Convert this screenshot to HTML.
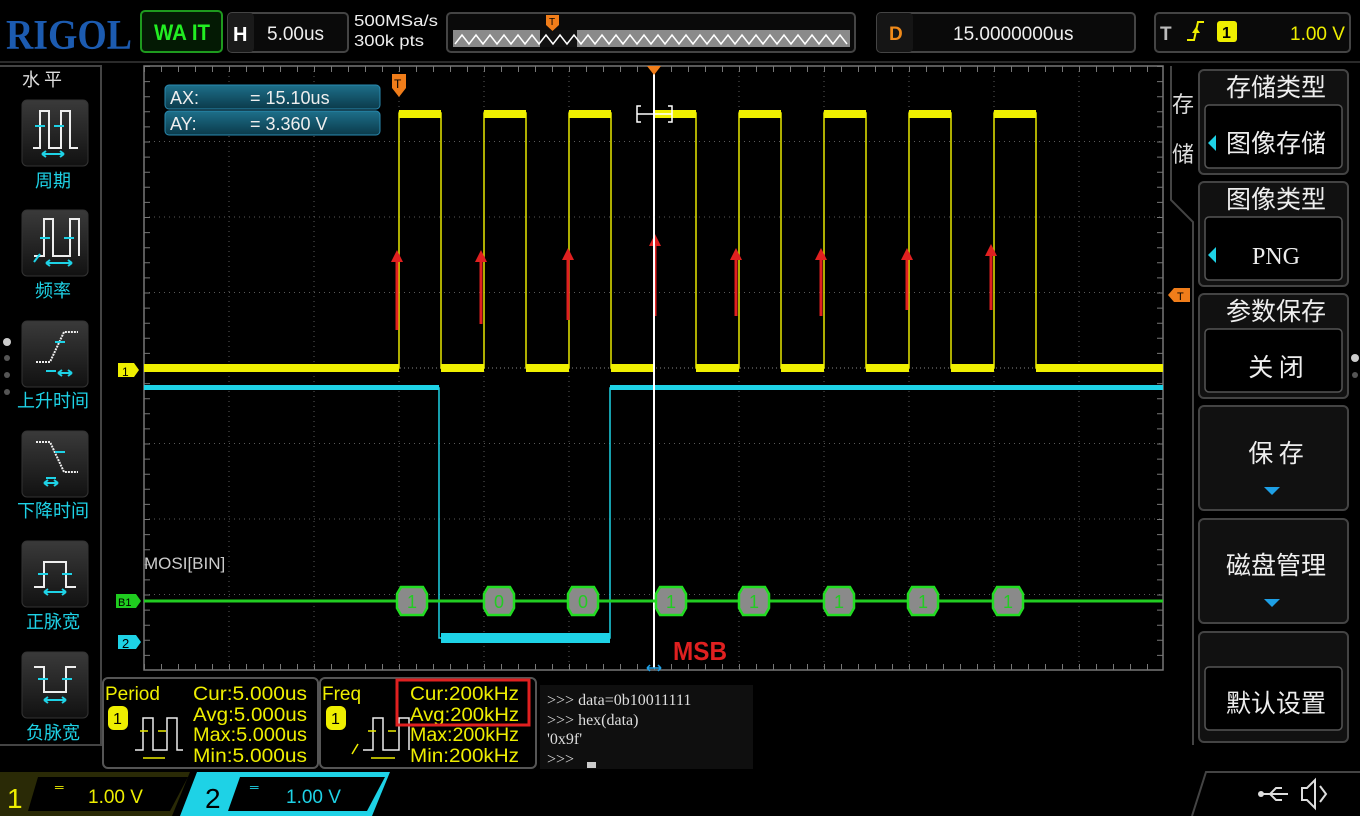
<!DOCTYPE html>
<html><head><meta charset="utf-8"><style>
html,body{margin:0;padding:0;background:#000;width:1360px;height:816px;overflow:hidden}
svg{display:block}
.s{font-family:"Liberation Sans","Noto Sans CJK SC",sans-serif}
.cj{font-family:"Noto Sans CJK SC","WenQuanYi Zen Hei",sans-serif}
.m{font-family:"Liberation Serif","Noto Serif CJK SC",serif}
</style></head><body>
<svg width="1360" height="816" viewBox="0 0 1360 816" xmlns="http://www.w3.org/2000/svg">
<defs>
<linearGradient id="btn" x1="0" y1="0" x2="0" y2="1"><stop offset="0" stop-color="#3a3a3a"/><stop offset="1" stop-color="#111"/></linearGradient>
<linearGradient id="axg" x1="0" y1="0" x2="0" y2="1"><stop offset="0" stop-color="#1d6f8a"/><stop offset="1" stop-color="#0b3a4a"/></linearGradient>
</defs>
<rect width="1360" height="816" fill="#000"/>
<!-- top bar -->
<text x="6" y="49" class="m" font-size="42" font-weight="bold" fill="#1c5bb0" textLength="126" lengthAdjust="spacingAndGlyphs">RIGOL</text>
<rect x="141" y="11" width="81" height="41" rx="4" fill="#041a04" stroke="#1e9a1e" stroke-width="2"/>
<text x="154" y="40" class="s" font-size="22" font-weight="bold" fill="#22ee22" textLength="56" lengthAdjust="spacingAndGlyphs">WA IT</text>
<rect x="228" y="13" width="120" height="39" rx="4" fill="#0a0a0a" stroke="#444" stroke-width="2"/>
<rect x="228" y="13" width="26" height="39" rx="4" fill="#1a1a1a"/>
<text x="233" y="41" class="s" font-size="20" font-weight="bold" fill="#fff">H</text>
<text x="267" y="40" class="s" font-size="19" fill="#eee">5.00us</text>
<text x="354" y="26" class="s" font-size="16" fill="#eee" textLength="84" lengthAdjust="spacingAndGlyphs">500MSa/s</text>
<text x="354" y="46" class="s" font-size="16" fill="#eee" textLength="70" lengthAdjust="spacingAndGlyphs">300k pts</text>
<rect x="447" y="13" width="408" height="39" rx="4" fill="#0a0a0a" stroke="#444" stroke-width="2"/>
<rect x="453" y="30" width="397" height="17" fill="#8a8a8a"/>
<rect x="540" y="30" width="37" height="17" fill="#111"/>
<polyline fill="none" stroke="#fff" stroke-width="1.5" points="455,44 462,35 469,44 476,35 483,44 490,35 497,44 504,35 511,44 518,35 525,44 532,35 539,44 546,35 553,44 560,35 567,44 574,35 581,44 588,35 595,44 602,35 609,44 616,35 623,44 630,35 637,44 644,35 651,44 658,35 665,44 672,35 679,44 686,35 693,44 700,35 707,44 714,35 721,44 728,35 735,44 742,35 749,44 756,35 763,44 770,35 777,44 784,35 791,44 798,35 805,44 812,35 819,44 826,35 833,44 840,35 847,44"/>
<path d="M546,15 h13 v10 l-6.5,6 l-6.5,-6z" fill="#f07d1a"/>
<text x="549" y="25" class="s" font-size="10" fill="#000">T</text>
<rect x="877" y="13" width="258" height="39" rx="4" fill="#0a0a0a" stroke="#444" stroke-width="2"/>
<rect x="877" y="13" width="36" height="39" rx="4" fill="#151515"/>
<text x="889" y="40" class="s" font-size="19" font-weight="bold" fill="#f08a1a">D</text>
<text x="953" y="40" class="s" font-size="19" fill="#eee">15.0000000us</text>
<rect x="1155" y="13" width="195" height="39" rx="4" fill="#0a0a0a" stroke="#444" stroke-width="2"/>
<text x="1160" y="40" class="s" font-size="19" font-weight="bold" fill="#bbb">T</text>
<path d="M1187,40 h7 l4,-18 h6" fill="none" stroke="#ee0" stroke-width="2"/>
<path d="M1192,33 l4,-6 l4,6z" fill="#ee0"/>
<rect x="1217" y="21" width="20" height="21" rx="3" fill="#ee0"/>
<text x="1222" y="38" class="s" font-size="16" font-weight="bold" fill="#000">1</text>
<text x="1290" y="40" class="s" font-size="19" fill="#ee0">1.00 V</text>
<line x1="0" y1="62" x2="1360" y2="62" stroke="#2a2a2a" stroke-width="2"/>

<!-- left panel -->
<path d="M0,66 H101 V745 H0" fill="none" stroke="#444" stroke-width="2"/>
<text x="22" y="86" class="cj" font-size="18" fill="#ddd">水 平</text>
<g fill="url(#btn)" stroke="#333">
<rect x="22" y="100" width="66" height="66" rx="5"/>
<rect x="22" y="210" width="66" height="66" rx="5"/>
<rect x="22" y="321" width="66" height="66" rx="5"/>
<rect x="22" y="431" width="66" height="66" rx="5"/>
<rect x="22" y="541" width="66" height="66" rx="5"/>
<rect x="22" y="652" width="66" height="66" rx="5"/>
</g>
<g fill="none" stroke="#eee" stroke-width="2">
<path d="M33,148 h7 v-37 h9 v37 h12 v-37 h9 v37 h8"/>
<path d="M34,256 h10 v-37 h9 v37 h17 v-37 h9 v37"/>
<path d="M36,362 h14 l14,-30 h14" stroke-dasharray="2 1"/>
<path d="M36,442 h14 l14,30 h14" stroke-dasharray="2 1"/>
<path d="M34,587 h10 v-25 h22 v25 h10"/>
<path d="M34,667 h10 v25 h22 v-25 h10"/>
</g>
<g fill="none" stroke="#1ed2e6" stroke-width="2">
<path d="M35,126 h10 M54,126 h10 M42,154 h22 M42,154 l4,-3 M42,154 l4,3 M64,154 l-4,-3 M64,154 l-4,3"/>
<path d="M40,238 h10 M64,238 h10 M46,263 h26 M46,263 l4,-3 M46,263 l4,3 M72,263 l-4,-3 M72,263 l-4,3 M34,262 l6,-8"/>
<path d="M55,342 h10 M46,371 h10 M58,373 h14 M58,373 l4,-3 M58,373 l4,3 M72,373 l-4,-3 M72,373 l-4,3"/>
<path d="M55,452 h10 M46,478 h10 M44,483 h14 M44,483 l4,-3 M44,483 l4,3 M58,483 l-4,-3 M58,483 l-4,3"/>
<path d="M38,574 h10 M62,574 h10 M44,592 h22 M44,592 l4,-3 M44,592 l4,3 M66,592 l-4,-3 M66,592 l-4,3"/>
<path d="M38,679 h10 M62,679 h10 M44,700 h22 M44,700 l4,-3 M44,700 l4,3 M66,700 l-4,-3 M66,700 l-4,3"/>
</g>
<g class="cj" font-size="18" fill="#1ed2e6" text-anchor="middle">
<text x="53" y="187">周期</text>
<text x="53" y="297">频率</text>
<text x="53" y="407">上升时间</text>
<text x="53" y="517">下降时间</text>
<text x="53" y="628">正脉宽</text>
<text x="53" y="739">负脉宽</text>
</g>
<circle cx="7" cy="342" r="4" fill="#ccc"/><circle cx="7" cy="358" r="3" fill="#555"/><circle cx="7" cy="375" r="3" fill="#555"/><circle cx="7" cy="392" r="3" fill="#555"/>

<!-- screen -->
<rect x="144" y="66" width="1019" height="604" fill="#000" stroke="#777" stroke-width="1.5"/>
<g stroke="#5a5a5a" stroke-width="1" stroke-dasharray="1 4">
<line x1="229" y1="66" x2="229" y2="670"/><line x1="314" y1="66" x2="314" y2="670"/><line x1="399" y1="66" x2="399" y2="670"/><line x1="484" y1="66" x2="484" y2="670"/><line x1="569" y1="66" x2="569" y2="670"/><line x1="739" y1="66" x2="739" y2="670"/><line x1="824" y1="66" x2="824" y2="670"/><line x1="909" y1="66" x2="909" y2="670"/><line x1="994" y1="66" x2="994" y2="670"/><line x1="1079" y1="66" x2="1079" y2="670"/>
<line x1="144" y1="141.5" x2="1163" y2="141.5"/><line x1="144" y1="217" x2="1163" y2="217"/><line x1="144" y1="292.5" x2="1163" y2="292.5"/><line x1="144" y1="443.5" x2="1163" y2="443.5"/><line x1="144" y1="519" x2="1163" y2="519"/><line x1="144" y1="594.5" x2="1163" y2="594.5"/>
</g>
<g stroke="#888" stroke-width="1" stroke-dasharray="1 3">
<line x1="654" y1="66" x2="654" y2="670"/><line x1="144" y1="368" x2="1163" y2="368"/>
</g>
<g stroke="#777" stroke-width="6" stroke-dasharray="1 16">
<line x1="144" y1="69" x2="1163" y2="69"/><line x1="144" y1="667" x2="1163" y2="667"/>
</g>
<g stroke="#777" stroke-width="6" stroke-dasharray="1 14.1">
<line x1="147" y1="66" x2="147" y2="670"/><line x1="1160" y1="66" x2="1160" y2="670"/>
</g>
<!-- yellow ch1 -->
<path d="M144,368 H399 V113 H441 V368 H484 V113 H526 V368 H569 V113 H611 V368 H654 V113 H696 V368 H739 V113 H781 V368 H824 V113 H866 V368 H909 V113 H951 V368 H994 V113 H1036 V368 H1163" fill="none" stroke="#e8e800" stroke-width="1.5"/>
<g fill="#f0f000">
<rect x="144" y="364" width="255" height="8"/><rect x="441" y="364" width="43" height="8"/><rect x="526" y="364" width="43" height="8"/><rect x="611" y="364" width="43" height="8"/><rect x="696" y="364" width="43" height="8"/><rect x="781" y="364" width="43" height="8"/><rect x="866" y="364" width="43" height="8"/><rect x="951" y="364" width="43" height="8"/><rect x="1036" y="364" width="127" height="8"/>
<rect x="399" y="110" width="42" height="8"/><rect x="484" y="110" width="42" height="8"/><rect x="569" y="110" width="42" height="8"/><rect x="654" y="110" width="42" height="8"/><rect x="739" y="110" width="42" height="8"/><rect x="824" y="110" width="42" height="8"/><rect x="909" y="110" width="42" height="8"/><rect x="994" y="110" width="42" height="8"/>
</g>
<!-- cyan ch2 -->
<path d="M144,388 H439 V638 H610 V388 H1163" fill="none" stroke="#1ed2e6" stroke-width="1.5"/>
<rect x="144" y="385" width="295" height="5" fill="#1ed2e6"/>
<rect x="610" y="385" width="553" height="5" fill="#1ed2e6"/>
<rect x="441" y="633" width="169" height="10" fill="#1ed2e6"/>
<!-- red arrows -->
<g stroke="#e02020" stroke-width="3" fill="#e02020">
<line x1="397" y1="330" x2="397" y2="258"/><line x1="481" y1="324" x2="481" y2="258"/><line x1="568" y1="320" x2="568" y2="256"/><line x1="655" y1="316" x2="655" y2="242"/><line x1="736" y1="316" x2="736" y2="256"/><line x1="821" y1="316" x2="821" y2="256"/><line x1="907" y1="310" x2="907" y2="256"/><line x1="991" y1="310" x2="991" y2="252"/>
</g>
<g fill="#e02020">
<path d="M391,262 l6,-12 l6,12z"/><path d="M475,262 l6,-12 l6,12z"/><path d="M562,260 l6,-12 l6,12z"/><path d="M649,246 l6,-12 l6,12z"/><path d="M730,260 l6,-12 l6,12z"/><path d="M815,260 l6,-12 l6,12z"/><path d="M901,260 l6,-12 l6,12z"/><path d="M985,256 l6,-12 l6,12z"/>
</g>
<!-- cursor -->
<line x1="654" y1="72" x2="654" y2="668" stroke="#fff" stroke-width="2"/>
<path d="M647,66 h14 l-7,9z" fill="#f07d1a"/>
<path d="M641,106 h-4 v16 h4 M668,106 h4 v16 h-4 M637,114 h35" fill="none" stroke="#fff" stroke-width="1.5"/>
<path d="M647,668 h14 M647,668 l3,-3 M647,668 l3,3 M661,668 l-3,-3 M661,668 l-3,3" stroke="#1ea0e6" stroke-width="1.5" fill="none"/>
<!-- T marker -->
<path d="M392,74 h14 v14 l-7,9 l-7,-9z" fill="#f07d1a"/>
<text x="394" y="88" class="s" font-size="12" fill="#000">T</text>
<!-- AX AY -->
<rect x="165" y="85" width="215" height="24" rx="4" fill="url(#axg)" stroke="#2a8ab0"/>
<rect x="165" y="111" width="215" height="24" rx="4" fill="url(#axg)" stroke="#2a8ab0"/>
<text x="170" y="104" class="s" font-size="18" fill="#eee">AX:</text>
<text x="250" y="104" class="s" font-size="18" fill="#eee">=  15.10us</text>
<text x="170" y="130" class="s" font-size="18" fill="#eee">AY:</text>
<text x="250" y="130" class="s" font-size="18" fill="#eee">=  3.360 V</text>
<!-- decode -->
<text x="144" y="569" class="s" font-size="17" fill="#ccc">MOSI[BIN]</text>
<line x1="144" y1="601" x2="1163" y2="601" stroke="#22cc22" stroke-width="3"/>
<g fill="#8a8a8a" stroke="#22dd22" stroke-width="2.5">
<path d="M401,587 h22 l4,7 v14 l-4,7 h-22 l-4,-7 v-14z"/>
<path d="M488,587 h22 l4,7 v14 l-4,7 h-22 l-4,-7 v-14z"/>
<path d="M572,587 h22 l4,7 v14 l-4,7 h-22 l-4,-7 v-14z"/>
<path d="M660,587 h22 l4,7 v14 l-4,7 h-22 l-4,-7 v-14z"/>
<path d="M743,587 h22 l4,7 v14 l-4,7 h-22 l-4,-7 v-14z"/>
<path d="M828,587 h22 l4,7 v14 l-4,7 h-22 l-4,-7 v-14z"/>
<path d="M912,587 h22 l4,7 v14 l-4,7 h-22 l-4,-7 v-14z"/>
<path d="M997,587 h22 l4,7 v14 l-4,7 h-22 l-4,-7 v-14z"/>
</g>
<g class="s" font-size="18" fill="#22cc22" text-anchor="middle">
<text x="412" y="608">1</text><text x="499" y="608">0</text><text x="583" y="608">0</text><text x="671" y="608">1</text><text x="754" y="608">1</text><text x="839" y="608">1</text><text x="923" y="608">1</text><text x="1008" y="608">1</text>
</g>
<text x="673" y="660" class="s" font-size="26" font-weight="bold" fill="#e02020" textLength="54" lengthAdjust="spacingAndGlyphs">MSB</text>
<!-- left markers -->
<path d="M118,363 h16 l5,7 l-5,7 h-16z" fill="#ee0"/><text x="122" y="376" class="s" font-size="12" fill="#000">1</text>
<path d="M116,594 h20 l5,7 l-5,7 h-20z" fill="#1fcc1f"/><text x="118" y="606" class="s" font-size="11" fill="#000">B1</text>
<path d="M118,635 h18 l5,7 l-5,7 h-18z" fill="#1ed2e6"/><text x="122" y="648" class="s" font-size="13" fill="#000">2</text>
<path d="M1190,288 h-16 l-6,7 l6,7 h16z" fill="#f07d1a"/><text x="1177" y="300" class="s" font-size="11" fill="#000">T</text>

<!-- right menu -->
<path d="M1171,66 V200 L1193,222 V745" fill="none" stroke="#444" stroke-width="2"/>
<text x="1172" y="112" class="cj" font-size="22" fill="#ddd">存</text>
<text x="1172" y="162" class="cj" font-size="22" fill="#ddd">储</text>
<g fill="#111" stroke="#444" stroke-width="2">
<rect x="1199" y="70" width="149" height="104" rx="5"/>
<rect x="1199" y="182" width="149" height="104" rx="5"/>
<rect x="1199" y="294" width="149" height="104" rx="5"/>
<rect x="1199" y="406" width="149" height="104" rx="5"/>
<rect x="1199" y="519" width="149" height="104" rx="5"/>
<rect x="1199" y="632" width="149" height="110" rx="5"/>
</g>
<g fill="#000" stroke="#555" stroke-width="1.5">
<rect x="1205" y="105" width="137" height="63" rx="4"/>
<rect x="1205" y="217" width="137" height="63" rx="4"/>
<rect x="1205" y="329" width="137" height="63" rx="4"/>
<rect x="1205" y="667" width="137" height="63" rx="4"/>
</g>
<g class="cj" font-size="25" fill="#eee" text-anchor="middle">
<text x="1276" y="96">存储类型</text>
<text x="1276" y="152">图像存储</text>
<text x="1276" y="208">图像类型</text>
<text x="1276" y="320">参数保存</text>
<text x="1276" y="376">关  闭</text>
<text x="1276" y="462">保  存</text>
<text x="1276" y="574">磁盘管理</text>
<text x="1276" y="712">默认设置</text>
</g>
<text x="1276" y="264" class="m" font-size="24" fill="#eee" text-anchor="middle">PNG</text>
<path d="M1216,135 l-8,8 l8,8z M1216,247 l-8,8 l8,8z" fill="#1ed2e6"/>
<path d="M1264,487 h16 l-8,8z M1264,599 h16 l-8,8z" fill="#1ea0e6"/>
<circle cx="1355" cy="358" r="4" fill="#ccc"/><circle cx="1355" cy="375" r="3" fill="#555"/>

<!-- measurement panels -->
<rect x="103" y="678" width="215" height="90" rx="5" fill="#000" stroke="#555" stroke-width="2"/>
<rect x="320" y="678" width="216" height="90" rx="5" fill="#000" stroke="#555" stroke-width="2"/>
<g class="s" font-size="19" fill="#ee0">
<text x="105" y="700">Period</text>
<text x="193" y="700" textLength="114" lengthAdjust="spacingAndGlyphs">Cur:5.000us</text>
<text x="193" y="721" textLength="114" lengthAdjust="spacingAndGlyphs">Avg:5.000us</text>
<text x="193" y="741" textLength="114" lengthAdjust="spacingAndGlyphs">Max:5.000us</text>
<text x="193" y="762" textLength="114" lengthAdjust="spacingAndGlyphs">Min:5.000us</text>
<text x="322" y="700">Freq</text>
<text x="410" y="700" textLength="109" lengthAdjust="spacingAndGlyphs">Cur:200kHz</text>
<text x="410" y="721" textLength="109" lengthAdjust="spacingAndGlyphs">Avg:200kHz</text>
<text x="410" y="741" textLength="109" lengthAdjust="spacingAndGlyphs">Max:200kHz</text>
<text x="410" y="762" textLength="109" lengthAdjust="spacingAndGlyphs">Min:200kHz</text>
</g>
<rect x="108" y="706" width="20" height="24" rx="6" fill="#ee0"/><text x="113" y="724" class="s" font-size="16" fill="#000">1</text>
<rect x="326" y="706" width="20" height="24" rx="6" fill="#ee0"/><text x="331" y="724" class="s" font-size="16" fill="#000">1</text>
<path d="M135,750 h8 v-32 h10 v32 h14 v-32 h10 v32 h6" fill="none" stroke="#eee" stroke-width="1.5"/>
<path d="M140,731 h8 M158,731 h8 M143,758 h22" stroke="#ee0" stroke-width="1.5" fill="none"/>
<path d="M363,750 h10 v-32 h10 v32 h16 v-32 h10 v32" fill="none" stroke="#eee" stroke-width="1.5"/>
<path d="M368,731 h8 M388,731 h8 M371,758 h24 M352,754 l6,-10" stroke="#ee0" stroke-width="1.5" fill="none"/>
<rect x="397" y="680" width="132" height="45" fill="none" stroke="#e02020" stroke-width="3"/>
<!-- console -->
<rect x="540" y="685" width="213" height="84" fill="#0f0f0f"/>
<g class="m" font-size="16" fill="#ddd">
<text x="547" y="705">&gt;&gt;&gt; data=0b10011111</text>
<text x="547" y="725">&gt;&gt;&gt; hex(data)</text>
<text x="547" y="744">'0x9f'</text>
<text x="547" y="764">&gt;&gt;&gt;</text>
</g>
<rect x="587" y="762" width="9" height="6" fill="#ccc"/>

<!-- channel bar -->
<path d="M0,772 H190 L172,816 H0z" fill="#2a2a06"/>
<path d="M38,777 H188 L170,811 H28z" fill="#000"/>
<text x="7" y="808" class="s" font-size="28" fill="#ee0">1</text>
<text x="55" y="791" class="s" font-size="12" fill="#ee0">═</text>
<text x="88" y="803" class="s" font-size="19" fill="#ee0">1.00 V</text>
<path d="M197,772 H390 L372,816 H180z" fill="#1ed2e6"/>
<path d="M240,777 H385 L367,811 H228z" fill="#000"/>
<text x="205" y="808" class="s" font-size="28" fill="#000">2</text>
<text x="250" y="791" class="s" font-size="12" fill="#1ed2e6">═</text>
<text x="286" y="803" class="s" font-size="19" fill="#1ed2e6">1.00 V</text>
<path d="M1192,816 L1206,772 H1360" fill="none" stroke="#444" stroke-width="2"/>
<path d="M1260,794 h28 M1270,794 l6,-6 h6 M1270,794 l6,6 h6" fill="none" stroke="#ddd" stroke-width="2"/>
<circle cx="1261" cy="794" r="3" fill="#ddd"/>
<path d="M1302,788 h5 l8,-8 v28 l-8,-8 h-5z M1320,786 l6,8 l-6,8" fill="none" stroke="#ddd" stroke-width="2"/>
</svg>
</body></html>
